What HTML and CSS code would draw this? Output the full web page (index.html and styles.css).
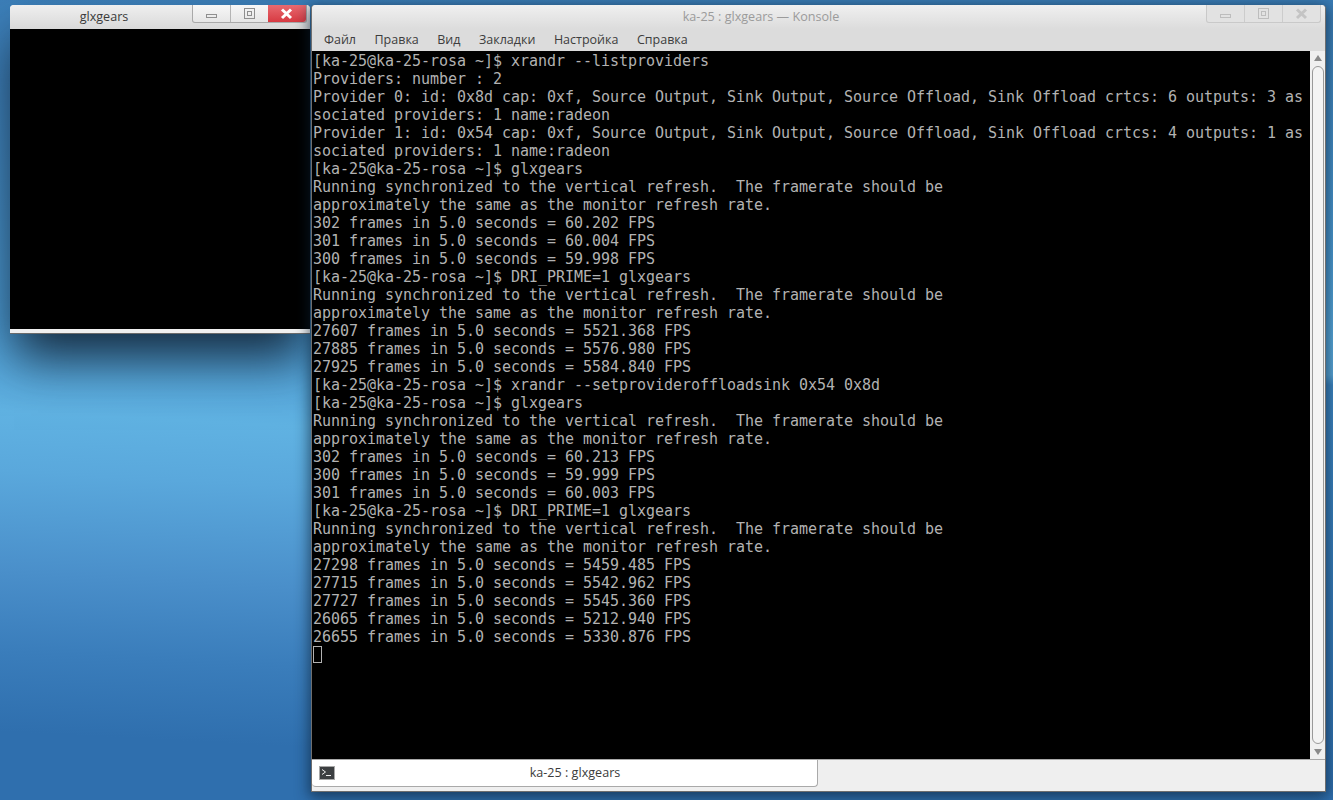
FILE: index.html
```html
<!DOCTYPE html>
<html lang="ru">
<head>
<meta charset="utf-8">
<title>ka-25 : glxgears — Konsole</title>
<link rel="stylesheet" href="styles.css">
</head>
<body>
<div class="desktop">
  <section class="window gears">
    <header class="titlebar gears-bar">
      <span class="title title-dark">glxgears</span>
      <div class="buttons">
        <span class="wbtn"><svg width="16" height="14" viewBox="0 0 16 14"><rect x="2.5" y="7.5" width="10" height="3" fill="none" stroke="#8f8f8f"/></svg></span>
        <span class="wbtn"><svg width="16" height="14" viewBox="0 0 16 14"><rect x="2.5" y="1.5" width="10" height="10" fill="none" stroke="#8f8f8f"/><rect x="5.5" y="4.5" width="4" height="4" fill="none" stroke="#8f8f8f"/></svg></span>
        <span class="wbtn wbtn-close"><svg width="16" height="14" viewBox="0 0 16 14"><path d="M3 2.5 L12 11 M12 2.5 L3 11" stroke="#fff" stroke-width="3" fill="none"/></svg></span>
      </div>
    </header>
    <div class="gears-canvas"></div>
    <div class="gears-foot"></div>
  </section>

  <section class="window konsole">
    <header class="titlebar konsole-bar">
      <span class="title title-dim">ka-25 : glxgears — Konsole</span>
      <div class="buttons buttons-dim">
        <span class="wbtn"><svg width="16" height="14" viewBox="0 0 16 14"><rect x="2.5" y="7.5" width="10" height="3" fill="none" stroke="#bdbdbd"/></svg></span>
        <span class="wbtn"><svg width="16" height="14" viewBox="0 0 16 14"><rect x="2.5" y="1.5" width="10" height="10" fill="none" stroke="#bdbdbd"/><rect x="5.5" y="4.5" width="4" height="4" fill="none" stroke="#bdbdbd"/></svg></span>
        <span class="wbtn"><svg width="16" height="14" viewBox="0 0 16 14"><path d="M3 2.5 L12 11 M12 2.5 L3 11" stroke="#c4c4c4" stroke-width="3" fill="none"/></svg></span>
      </div>
    </header>
    <nav class="menubar">
      <span>Файл</span><span>Правка</span><span>Вид</span><span>Закладки</span><span>Настройка</span><span>Справка</span>
    </nav>
    <div class="term-row">
      <pre class="terminal">[ka-25@ka-25-rosa ~]$ xrandr --listproviders
Providers: number : 2
Provider 0: id: 0x8d cap: 0xf, Source Output, Sink Output, Source Offload, Sink Offload crtcs: 6 outputs: 3 as
sociated providers: 1 name:radeon
Provider 1: id: 0x54 cap: 0xf, Source Output, Sink Output, Source Offload, Sink Offload crtcs: 4 outputs: 1 as
sociated providers: 1 name:radeon
[ka-25@ka-25-rosa ~]$ glxgears
Running synchronized to the vertical refresh.  The framerate should be
approximately the same as the monitor refresh rate.
302 frames in 5.0 seconds = 60.202 FPS
301 frames in 5.0 seconds = 60.004 FPS
300 frames in 5.0 seconds = 59.998 FPS
[ka-25@ka-25-rosa ~]$ DRI_PRIME=1 glxgears
Running synchronized to the vertical refresh.  The framerate should be
approximately the same as the monitor refresh rate.
27607 frames in 5.0 seconds = 5521.368 FPS
27885 frames in 5.0 seconds = 5576.980 FPS
27925 frames in 5.0 seconds = 5584.840 FPS
[ka-25@ka-25-rosa ~]$ xrandr --setprovideroffloadsink 0x54 0x8d
[ka-25@ka-25-rosa ~]$ glxgears
Running synchronized to the vertical refresh.  The framerate should be
approximately the same as the monitor refresh rate.
302 frames in 5.0 seconds = 60.213 FPS
300 frames in 5.0 seconds = 59.999 FPS
301 frames in 5.0 seconds = 60.003 FPS
[ka-25@ka-25-rosa ~]$ DRI_PRIME=1 glxgears
Running synchronized to the vertical refresh.  The framerate should be
approximately the same as the monitor refresh rate.
27298 frames in 5.0 seconds = 5459.485 FPS
27715 frames in 5.0 seconds = 5542.962 FPS
27727 frames in 5.0 seconds = 5545.360 FPS
26065 frames in 5.0 seconds = 5212.940 FPS
26655 frames in 5.0 seconds = 5330.876 FPS
<span class="cursor"></span></pre>
      <aside class="scrollbar">
        <span class="arrow arrow-up"></span>
        <span class="thumb"></span>
        <span class="arrow arrow-down"></span>
      </aside>
    </div>
    <div class="tabbar">
      <div class="tab">
        <svg class="tab-icon" width="16" height="14" viewBox="0 0 16 14"><rect x="0.5" y="0.5" width="15" height="13" fill="#3c3f41" stroke="#a8a8a8"/><path d="M3 3.5 L6.5 6 L3 8.5" stroke="#eee" fill="none"/><path d="M7 9.5 H12" stroke="#eee"/></svg>
        <span class="tab-label">ka-25 : glxgears</span>
      </div>
    </div>
  </section>
</div>
</body>
</html>
```
FILE: styles.css
```css
html, body {
  margin: 0;
  padding: 0;
  width: 1333px;
  height: 800px;
  overflow: hidden;
}

.desktop {
  position: relative;
  width: 1333px;
  height: 800px;
  overflow: hidden;
  background:
    linear-gradient(180deg, #3a7cb5 0, #4b9ad2 250px, #58a9dc 340px, #5aa8da 375px, #3d87c4 385px, #2f6fae 800px) right / 7px 100% no-repeat,
    linear-gradient(183deg, #3a7cb5 0, #3f84bf 150px, #4e9fd8 390px, #60b2e2 480px, #5aa8dc 540px, #4a8fca 640px, #3a7dbb 720px, #2f6fae 800px);
  font-family: "Open Sans", "Noto Sans", sans-serif;
}

.window {
  position: absolute;
  display: flex;
  flex-direction: column;
  box-sizing: border-box;
}

.gears {
  left: 10px;
  top: 5px;
  width: 300px;
  height: 329px;
  background: #efefef;
  border-bottom: 1px solid #6b6b6b;
  border-radius: 4px 4px 0 0;
  box-shadow: 0 28px 48px -4px rgba(15, 30, 45, 0.9);
}

.konsole {
  left: 311px;
  top: 5px;
  width: 1015px;
  height: 787px;
  background: #efefef;
  border: solid #6e6e6e;
  border-width: 0 1px 1px 1px;
  border-radius: 4px 4px 0 0;
  box-shadow: 0 3px 14px 2px rgba(10, 30, 50, 0.65);
}

.titlebar {
  display: flex;
  flex: none;
  align-items: flex-start;
  box-sizing: border-box;
  height: 24px;
  border-radius: 4px 4px 0 0;
}

.gears-bar {
  padding: 0 3px 0 6px;
  background: linear-gradient(180deg, #efefef 0%, #d9d9d9 100%);
}

.konsole-bar {
  padding: 0 4px 0 4px;
  background: linear-gradient(180deg, #f0f0f0 0%, #dcdcdc 100%);
}

.title {
  flex: 1;
  text-align: center;
  font-size: 12.6px;
  line-height: 23px;
}

.title-dark {
  color: #3a3a3a;
}

.title-dim {
  color: #9b9b9b;
}

.buttons {
  display: flex;
  flex: none;
  height: 17px;
  border: 1px solid #a9a9a9;
  border-top: 0;
  border-radius: 0 0 3px 3px;
  background: linear-gradient(180deg, #f7f7f7, #e6e6e6);
}

.buttons-dim {
  border-color: #c9c9c9;
  background: #e2e2e2;
}

.wbtn {
  display: flex;
  align-items: center;
  justify-content: center;
  box-sizing: border-box;
  width: 38px;
  border-left: 1px solid #b4b4b4;
}

.wbtn:first-child {
  width: 37px;
  border-left: 0;
}

.buttons-dim .wbtn {
  border-color: #cccccc;
}

.wbtn-close {
  border-left: 0;
  background: linear-gradient(180deg, #e86a70, #d73a42);
  border-radius: 0 0 3px 0;
}

.gears-canvas {
  flex: none;
  height: 300px;
  background: #000;
}

.gears-foot {
  flex: 1;
  background: #f0f0f0;
}

.menubar {
  display: flex;
  flex: none;
  gap: 18.5px;
  height: 22px;
  padding-left: 12px;
  background: #dcdcdc;
  color: #3d3d3d;
  font-size: 12.5px;
  line-height: 21px;
}

.term-row {
  display: flex;
  flex: none;
  height: 708px;
}

.terminal {
  flex: none;
  box-sizing: border-box;
  width: 998px;
  height: 708px;
  margin: 0;
  padding: 1px 0 0 1px;
  overflow: hidden;
  background: #000;
  color: #b2b2b2;
  font-family: "DejaVu Sans Mono", monospace;
  font-size: 15px;
  letter-spacing: -0.03px;
  line-height: 18px;
}

.cursor {
  display: inline-block;
  box-sizing: border-box;
  width: 9px;
  height: 17px;
  border: 1px solid #b2b2b2;
  vertical-align: top;
}

.scrollbar {
  display: flex;
  flex: 1;
  flex-direction: column;
  align-items: center;
  background: #f0f0f0;
  padding: 4px 0;
  box-sizing: border-box;
}

.arrow {
  flex: none;
  width: 0;
  height: 0;
  border-left: 4px solid transparent;
  border-right: 4px solid transparent;
}

.arrow-up {
  border-bottom: 6px solid #8a8a8a;
}

.arrow-down {
  border-top: 6px solid #8a8a8a;
}

.thumb {
  flex: 1;
  width: 10px;
  margin: 5px 0;
  border: 1px solid #9a9a9a;
  border-radius: 6px;
  background: #f4f4f4;
}

.tabbar {
  flex: 1;
  border-top: 1px solid #a9a9a9;
  background: #efefef;
}

.tab {
  display: flex;
  align-items: center;
  box-sizing: border-box;
  width: 506px;
  height: 27px;
  padding: 0 2px 1px 7px;
  background: #fff;
  border-right: 1px solid #a9a9a9;
  border-bottom: 1px solid #a9a9a9;
  border-radius: 0 0 4px 4px;
}

.tab-icon {
  flex: none;
}

.tab-label {
  flex: 1;
  text-align: center;
  color: #3c3c3c;
  font-size: 12.6px;
  line-height: 20px;
}
```
